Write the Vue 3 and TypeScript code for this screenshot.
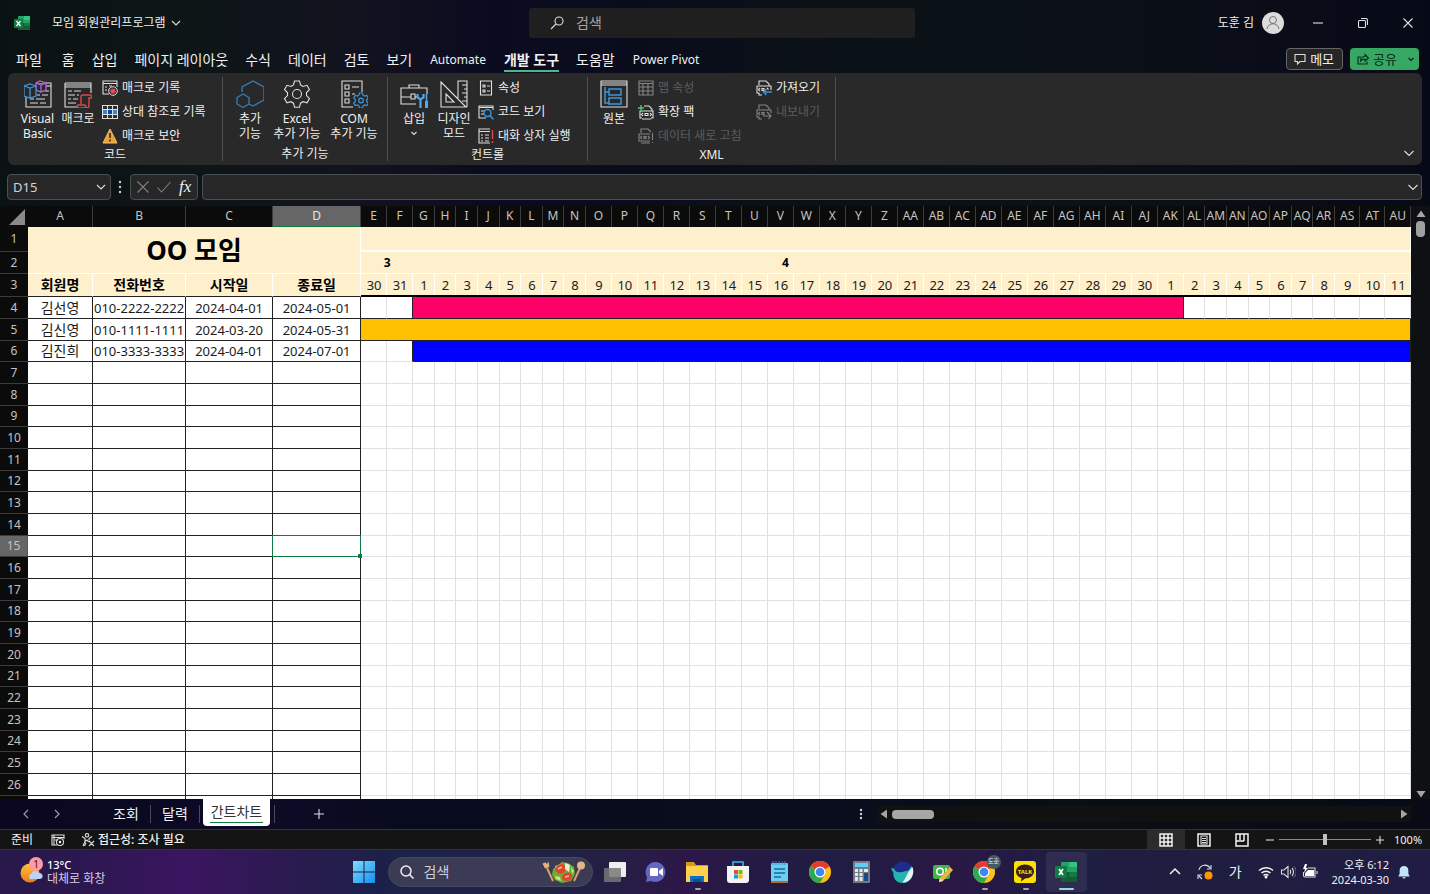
<script setup lang="ts">
import { computed, ref } from 'vue'

interface Member {
  name: string
  phone: string
  start: string
  end: string
  lead: number
  span: number
  color: string
}

const tabs = ['파일', '홈', '삽입', '페이지 레이아웃', '수식', '데이터', '검토', '보기', 'Automate', '개발 도구', '도움말', 'Power Pivot']
const activeTab = ref('개발 도구')
const cellName = ref('D15')
const formula = ref('')
const query = ref('')
const taskQuery = ref('')
const zoom = ref(50)

function columnName(i: number): string {
  const head = Math.floor(i / 26)
  return (head > 0 ? String.fromCharCode(64 + head) : '') + String.fromCharCode(65 + (i % 26))
}

const columns = Array.from({ length: 47 }, (_, i) => columnName(i))

const days = [30, 31, ...Array.from({ length: 30 }, (_, i) => i + 1), ...Array.from({ length: 11 }, (_, i) => i + 1)]

// Relative column weights: row header, A to D, then one per day.
const weights = [
  280, 650, 930, 870, 880,
  ...columns.slice(4).map((_, i) => {
    const narrow = (i >= 2 && i <= 9) || (i >= 33 && i <= 39)
    return narrow ? 216 : i > 39 ? 252 : 260
  }),
]
const totalWeight = weights.reduce((a, b) => a + b, 0)
const columnWidths = computed(() => weights.map((w) => `${(w / totalWeight) * 100}%`))

const members: Member[] = [
  { name: '김선영', phone: '010-2222-2222', start: '2024-04-01', end: '2024-05-01', lead: 2, span: 31, color: 'pink' },
  { name: '김신영', phone: '010-1111-1111', start: '2024-03-20', end: '2024-05-31', lead: 0, span: 43, color: 'amber' },
  { name: '김진희', phone: '010-3333-3333', start: '2024-04-01', end: '2024-07-01', lead: 2, span: 41, color: 'blue' },
]
const emptyRows = Array.from({ length: 21 }, (_, i) => i + 7)
const isLast = (n: number) => n === 27
</script>

<template>
  <div class="app">
    <div class="window">
      <header class="titlebar">
        <div class="doc">
          <svg class="i16" viewBox="0 0 16 16"><rect x="4" y="1" width="12" height="14" rx="1" fill="#21a366" /><path d="M10 1h5a1 1 0 0 1 1 1v3h-6z" fill="#33c481" /><path d="M4 8h12v6a1 1 0 0 1-1 1H5a1 1 0 0 1-1-1z" fill="#185c37" /><path d="M10 8h6v3h-6z" fill="#107c41" /><rect x="0" y="4" width="9" height="9" rx="1" fill="#107c41" /><path d="M2.500 6l4 5M6.500 6l-4 5" stroke="#fff" stroke-width="1.300" /></svg>
          <button class="docname" type="button">모임 회원관리프로그램
            <svg class="i10" viewBox="0 0 10 10"><path d="M1 3l4 4 4-4" class="ln" /></svg>
          </button>
        </div>
        <label class="search">
          <svg class="i14" viewBox="0 0 14 14"><circle cx="9" cy="5" r="4" class="ln" /><path d="M6 8L1 13" class="ln" /></svg>
          <input v-model="query" type="text" placeholder="검색" aria-label="검색" />
        </label>
        <div class="winctl">
          <span class="user">도훈 김</span>
          <svg class="avatar" viewBox="0 0 22 22"><circle cx="11" cy="11" r="11" fill="#dcdcdc" /><circle cx="11" cy="8" r="3.500" fill="none" stroke="#777" /><path d="M5 17c1-7 11-7 12 0" fill="none" stroke="#777" /></svg>
          <button type="button" aria-label="최소화"><svg class="i10" viewBox="0 0 10 10"><path d="M0 5h10" class="ln" /></svg></button>
          <button type="button" aria-label="이전 크기로"><svg class="i10" viewBox="0 0 10 10"><rect x=".5" y="2.500" width="7" height="7" rx="1" class="ln" /><path d="M3 .5h4.500a2 2 0 0 1 2 2V7" class="ln" /></svg></button>
          <button type="button" aria-label="닫기"><svg class="i10" viewBox="0 0 10 10"><path d="M.5.5l9 9M9.500.5l-9 9" class="ln" /></svg></button>
        </div>
      </header>

      <nav class="tabs">
        <button v-for="t in tabs" :key="t" type="button" :class="{ active: t === activeTab, latin: /^[A-Z]/.test(t) }" @click="activeTab = t">{{ t }}</button>
        <span class="grow"></span>
        <button type="button" class="memo">
          <svg class="i12" viewBox="0 0 12 12"><path d="M1 1.500h10v7H6L3.500 11V8.500H1z" class="ln" /></svg>메모
        </button>
        <button type="button" class="share">
          <svg class="i12" viewBox="0 0 12 12"><path d="M4 4H1v7h9V8.500M3.500 8c0-3 2-4.500 4.500-4.500V1.500L11.500 5 8 8V6C6 6 4.500 6.500 3.500 8z" class="ln" /></svg>공유
          <svg class="caret" viewBox="0 0 6 6"><path d="M.5 2L3 4.500 5.500 2" class="ln" /></svg>
        </button>
      </nav>

      <section class="ribbon">
        <div class="group g-code">
          <div class="body">
            <button type="button" class="big w41">
              <svg viewBox="0 0 28 28"><path d="M14 3h13v24H2V17" class="ln" /><path d="M15 6h12" class="ln" /><path d="M15 11h4M21 11h4M13 15h3M18 15h6M6 19h4M12 19h9M6 23h8M16 23h6" class="ln" /><path d="M16 1l6 2v7l-5 2-5-2V3zM12 3l5 2 5-2M17 5v7" fill="#292929" stroke="#b56ad0" stroke-width="1.300" /><path d="M6 4l6 2v10l-6 2-6-2V6zM.5 6L6 8l6-2M6 8v10" fill="#292929" stroke="#3a96dd" stroke-width="1.300" /></svg>
              <span>Visual<br />Basic</span>
            </button>
            <button type="button" class="big w40">
              <svg viewBox="0 0 28 28"><path d="M1 3h26v10M1 3v24h13M1 7h26M1 5h26" class="ln" /><path d="M4 11h4M10 11h7M4 15h7M13 15h2M4 19h3M9 19h5M4 23h8" class="ln" /><path d="M17 24V17c0-2 1-2 2-2h7c2 0 2 3 1 3h-2v7c0 3-1 3-2 3h-8c-2 0-2-3-1-3h7c1 0 0 3 2 3" fill="#292929" stroke="#e04848" stroke-width="1.400" /></svg>
              <span>매크로</span>
            </button>
            <div class="list l-code">
              <button type="button"><svg viewBox="0 0 16 16"><path d="M15 7V1H1v13h6M1 3.500h14M3 7h2M3 10h2M7 6h3M6 10h1" class="ln" /><circle cx="11" cy="11" r="4.300" fill="#292929" stroke="#ddd" /><circle cx="11" cy="11" r="2.600" fill="#e8484f" /></svg>매크로 기록</button>
              <button type="button"><svg viewBox="0 0 16 16"><rect x="1" y="5" width="14" height="6" fill="#2b88d8" /><rect x="6" y="5" width="4" height="6" fill="#103f91" /><path d="M.5 1.500h15v13H.5zM.5 5.500h15M.5 10.500h15M5.500 1.500v13M10.500 1.500v13" class="ln" /></svg>상대 참조로 기록</button>
              <button type="button"><svg viewBox="0 0 16 16"><path d="M8 1l7 14H1z" fill="#e9a13b" stroke="#f4c067" /><path d="M8 5v5M8 11.500v2" stroke="#3b2a10" stroke-width="1.600" /></svg>매크로 보안</button>
            </div>
          </div>
          <div class="caption">코드</div>
        </div>

        <div class="group g-addin">
          <div class="body">
            <button type="button" class="big w44">
              <svg viewBox="0 0 28 28"><path d="M6 12V7l11-6 11 6v13l-11 6-4-2" fill="none" stroke="#2f7fc4" stroke-width="1.300" /><path d="M7 14l6 3.500v6.500l-6 3.500-6-3.500v-6.500z" fill="none" stroke="#2f7fc4" stroke-width="1.300" /></svg>
              <span>추가<br />기능</span>
            </button>
            <button type="button" class="big w50">
              <svg viewBox="0 0 28 28"><path d="M11.500 1h5l1 4 2.500 1.500 4-1.200 2.500 4.300-3 3v3l3 3-2.500 4.300-4-1.200-2.500 1.500-1 4h-5l-1-4L8 21.700l-4 1.200-2.500-4.300 3-3v-3l-3-3L4 5.300l4 1.200L10.500 5z" class="ln" /><circle cx="14" cy="14" r="4.500" class="ln" /></svg>
              <span>Excel<br />추가 기능</span>
            </button>
            <button type="button" class="big w64">
              <svg viewBox="0 0 28 28"><path d="M22 12V1H2v26h11" class="ln" /><path d="M5 5h4v4H5zM5 12h4v4H5zM5 19h4v4H5zM12 7h7M12 14h3" class="ln" /><path d="M19.500 13h3l.6 2.200 1.500.9 2.200-.7 1.500 2.600-1.600 1.600v1.800l1.600 1.600-1.500 2.600-2.200-.7-1.500.9-.6 2.200h-3l-.6-2.200-1.500-.9-2.200.7-1.500-2.600 1.600-1.600v-1.800l-1.600-1.600 1.500-2.600 2.200.7 1.500-.9z" fill="#292929" stroke="#3a96dd" stroke-width="1.200" /><circle cx="21" cy="20.500" r="2.300" fill="none" stroke="#3a96dd" stroke-width="1.200" /></svg>
              <span>COM<br />추가 기능</span>
            </button>
          </div>
          <div class="caption">추가 기능</div>
        </div>

        <div class="group g-control">
          <div class="body">
            <button type="button" class="big w40">
              <svg viewBox="0 0 28 28"><path d="M9 8V5h10v3M16 24H1V8h26v6M1 17h10M15 17h2M11 14h4v5h-4z" class="ln" /><path d="M17.500 14v3.500l3 2 3-2V14M20.500 19v9" fill="none" stroke="#55a9ea" stroke-width="2.200" /><path d="M26.500 14v7" stroke="#55a9ea" stroke-width="1.500" /><path d="M26.500 21v7" stroke="#55a9ea" stroke-width="3" /></svg>
              <span>삽입</span><svg class="down" viewBox="0 0 6 6"><path d="M.5 2L3 4.500 5.500 2" class="ln" /></svg>
            </button>
            <button type="button" class="big w40">
              <svg viewBox="0 0 28 28"><path d="M1 2l25 25H1zM6 14l8 8H6zM18 18V1h9v26M22 5h5M24 9h3M22 13h5M24 17h3M22 21h5" class="ln" /></svg>
              <span>디자인<br />모드</span>
            </button>
            <div class="list l-control">
              <button type="button"><svg viewBox="0 0 16 16"><path d="M2.500 1h11v14h-11zM5 5h2v2H5zM5 10h2v2H5zM9 6h3M9 11h3" class="ln" /></svg>속성</button>
              <button type="button"><svg viewBox="0 0 16 16"><path d="M15 6V2H1v12h7M1 3.500h14M3 7h3M3 10h3" class="ln" /><circle cx="9.500" cy="9" r="3.500" fill="#292929" stroke="#3a96dd" stroke-width="1.400" /><path d="M12 11.500l3.500 4" stroke="#3a96dd" stroke-width="1.500" /></svg>코드 보기</button>
              <button type="button"><svg viewBox="0 0 16 16"><path d="M12 1H1v14h11M1 3.500h11M3 7h2M7 7h4M3 10h2M7 10h4M3 13h2M7 13h4" class="ln" /><path d="M14.500 2v9M14.500 13v2" stroke="#e04848" stroke-width="1.400" /></svg>대화 상자 실행</button>
            </div>
          </div>
          <div class="caption">컨트롤</div>
        </div>

        <div class="group g-xml">
          <div class="body">
            <button type="button" class="big w40">
              <svg viewBox="0 0 28 28"><path d="M1 1h26v26H1zM1 3h26M1 5h26" class="ln" /><path d="M5 7v16h4M5 12h4M9 9h12v6H9zM9 18h12v6H9z" fill="none" stroke="#3a96dd" stroke-width="1.500" /></svg>
              <span>원본</span>
            </button>
            <div class="list l-xml">
              <button type="button" disabled><svg viewBox="0 0 16 16"><path d="M1 1h14v14H1zM1 3.500h14M1 7h14M1 11h14M5 3v12M10 3v12" class="ln" /></svg>맵 속성</button>
              <button type="button"><svg viewBox="0 0 16 16"><path d="M6 2h5l3 3v2M4 14H2V7h13v7h-2M4 15h9M5 9l-1.500 1.500L5 12M12 9l1.500 1.500L12 12M7 9.500h3v2H7z" class="ln" /><path d="M3 1v6M0 4h6" stroke="#4cc47c" stroke-width="1.400" /></svg>확장 팩</button>
              <button type="button" disabled><svg viewBox="0 0 16 16"><path d="M3 5V1h7l3 3M12 6H1v7h11M3 15h9M4 8l-1.500 1.500L4 11M10 8l1.500 1.500L10 11M6 8.500h2v2H6zM14.500 5v7M14.500 14v1" class="ln" /></svg>데이터 새로 고침</button>
            </div>
            <div class="list">
              <button type="button"><svg viewBox="0 0 16 16"><path d="M3 5V1h7l3 3v2M6 15H3v-2H1V6h14v4M4 8l-1.500 1.500L4 11M11 8l1.500 1.500M6 8.500h2v2H6z" class="ln" /><path d="M16 12H8M10.500 9L7.500 12l3 3" fill="none" stroke="#3a96dd" stroke-width="1.400" /></svg>가져오기</button>
              <button type="button" disabled><svg viewBox="0 0 16 16"><path d="M3 5V1h7l3 3v2M6 15H3v-2H1V6h14v3M4 8l-1.500 1.500L4 11M11 8l1.500 1.500M6 8.500h2v2H6zM7 12h8M12.500 9.500L15 12l-2.500 3" class="ln" /></svg>내보내기</button>
            </div>
          </div>
          <div class="caption">XML</div>
        </div>
        <button type="button" class="collapse" aria-label="리본 축소"><svg class="i10" viewBox="0 0 10 10"><path d="M.5 3L5 7.500 9.500 3" class="ln" /></svg></button>
      </section>

      <div class="formulabar">
        <label class="namebox"><input v-model="cellName" type="text" aria-label="이름 상자" /><svg class="i10" viewBox="0 0 10 10"><path d="M1 3l4 4 4-4" class="ln" /></svg></label>
        <svg class="dots" viewBox="0 0 4 14"><circle cx="2" cy="2" r="1.200" /><circle cx="2" cy="7" r="1.200" /><circle cx="2" cy="12" r="1.200" /></svg>
        <div class="fx">
          <button type="button" aria-label="취소"><svg class="i12" viewBox="0 0 12 12"><path d="M.5.5l11 11M11.500.5l-11 11" class="dim" /></svg></button>
          <button type="button" aria-label="입력"><svg class="i14" viewBox="0 0 14 12"><path d="M.5 6.500l4 4.500 9-10" class="dim" /></svg></button>
          <button type="button" class="fn">fx</button>
        </div>
        <label class="formula"><input v-model="formula" type="text" aria-label="수식 입력줄" /><svg class="i10" viewBox="0 0 10 10"><path d="M.5 3L5 7.500 9.500 3" class="ln" /></svg></label>
      </div>

      <main class="sheet">
        <div class="gridwrap">
          <table>
            <colgroup><col v-for="(w, i) in columnWidths" :key="i" :style="{ width: w }" /></colgroup>
            <thead>
              <tr class="cols">
                <th class="corner"><svg viewBox="0 0 16 16"><path d="M16 0v16H0z" fill="#8a8a8a" /></svg></th>
                <th v-for="c in columns" :key="c" :class="{ sel: c === 'D' }"><span>{{ c }}</span></th>
              </tr>
            </thead>
            <tbody class="heads">
              <tr class="r1"><th class="rn">1</th><td class="title" colspan="4" rowspan="2">OO 모임</td><td class="band" colspan="43"></td></tr>
              <tr class="r2"><th class="rn">2</th><td class="month m3" colspan="2">3</td><td class="month" colspan="30">4</td><td class="month" colspan="11"></td></tr>
              <tr class="r3"><th class="rn">3</th><td class="label">회원명</td><td class="label">전화번호</td><td class="label">시작일</td><td class="label">종료일</td><td v-for="(d, i) in days" :key="i" class="day">{{ d }}</td></tr>
            </tbody>
            <tbody class="rows">
              <tr v-for="(m, r) in members" :key="m.name">
                <th class="rn">{{ r + 4 }}</th>
                <td class="box name">{{ m.name }}</td><td class="box">{{ m.phone }}</td><td class="box">{{ m.start }}</td><td class="box">{{ m.end }}</td>
                <td v-for="k in m.lead" :key="'l' + k" class="pre" :class="{ edge: k === m.lead, soft: r === 2 }"></td>
                <td class="bar" :class="m.color" :colspan="m.span"></td>
                <td v-for="k in 43 - m.lead - m.span" :key="'t' + k" class="pre"></td>
              </tr>
              <tr v-for="n in emptyRows" :key="n">
                <th class="rn" :class="{ sel: n === 15 }">{{ isLast(n) ? '' : n }}</th>
                <td v-for="k in 4" :key="k" class="box"><div v-if="n === 15 && k === 4" class="cursor"></div></td>
                <td v-for="k in 43" :key="'g' + k"></td>
              </tr>
            </tbody>
          </table>
        </div>
        <div class="vscroll">
          <svg class="i10" viewBox="0 0 10 10"><path d="M5 1.500L9.500 8h-9z" /></svg>
          <span class="vthumb"></span>
          <span class="grow"></span>
          <svg class="i10" viewBox="0 0 10 10"><path d="M5 8.500L.5 2h9z" /></svg>
        </div>
      </main>

      <div class="sheetbar">
        <div class="arrows">
          <button type="button" aria-label="이전 시트"><svg class="i10" viewBox="0 0 10 10"><path d="M7 1L3 5l4 4" class="dim2" /></svg></button>
          <button type="button" aria-label="다음 시트"><svg class="i10" viewBox="0 0 10 10"><path d="M3 1l4 4-4 4" class="dim2" /></svg></button>
        </div>
        <button type="button" class="st">조회</button>
        <button type="button" class="st">달력</button>
        <button type="button" class="st on"><span>간트차트</span></button>
        <i class="sep"></i>
        <button type="button" class="plus" aria-label="새 시트"><svg class="i10" viewBox="0 0 10 10"><path d="M5 0v10M0 5h10" class="ln" /></svg></button>
        <span class="grow"></span>
        <svg class="dots" viewBox="0 0 4 14"><circle cx="2" cy="3" r="1.200" /><circle cx="2" cy="7" r="1.200" /><circle cx="2" cy="11" r="1.200" /></svg>
        <div class="hscroll">
          <svg class="i10" viewBox="0 0 10 10"><path d="M1.500 5L8 .5v9z" /></svg>
          <span class="hthumb"></span>
          <span class="grow"></span>
          <svg class="i10" viewBox="0 0 10 10"><path d="M8.500 5L2 .5v9z" /></svg>
        </div>
      </div>

      <footer class="status">
        <span class="ready">준비</span>
        <svg class="i14" viewBox="0 0 14 14"><path d="M13 6V2H1v10h5M1 4.500h12M3 2v10M4 7h3" class="ln" /><circle cx="9" cy="9" r="3.500" class="ln" /><circle cx="9" cy="9" r="1.200" fill="#fff" /></svg>
        <svg class="i14 acc" viewBox="0 0 14 14"><circle cx="6" cy="2.300" r="1.700" class="ln" /><path d="M1 3.500l3 2v3L2 13M11 3.500L8 5.500v2M4 8.500L6 7l1.500 2M5 9.500L3.500 13M8 8l5 5M13 8l-5 5" class="ln" /></svg>
        <b>접근성: 조사 필요</b>
        <span class="grow"></span>
        <button type="button" class="view on" aria-label="기본"><svg class="i14" viewBox="0 0 14 14"><path d="M1 1h12v12H1zM1 5h12M1 9h12M5 1v12M9 1v12" class="lnb" /></svg></button>
        <button type="button" class="view" aria-label="페이지 레이아웃"><svg class="i14" viewBox="0 0 14 14"><path d="M1 1h12v12H1z" class="lnb" /><path d="M4 3h6v8H4zM5 5.500h4M5 7.500h4M5 9.500h4" class="ln" /></svg></button>
        <button type="button" class="view" aria-label="페이지 나누기"><svg class="i14" viewBox="0 0 14 14"><path d="M1 1h12v12H1zM5 1v6M9 1v7M1 8h8" class="lnb" /></svg></button>
        <button type="button" class="zb" aria-label="축소"><svg class="i8" viewBox="0 0 8 8"><path d="M0 4h8" class="ln" /></svg></button>
        <input v-model="zoom" class="zoom" type="range" min="0" max="100" aria-label="확대/축소" />
        <button type="button" class="zb" aria-label="확대"><svg class="i8" viewBox="0 0 8 8"><path d="M0 4h8M4 0v8" class="ln" /></svg></button>
        <span class="pct">100%</span>
      </footer>
    </div>

    <div class="taskbar">
      <button type="button" class="weather">
        <svg viewBox="0 0 24 26"><defs><linearGradient id="sun" x1="0" y1="0" x2="0" y2="1"><stop offset="0" stop-color="#ffc23c" /><stop offset="1" stop-color="#ee7a1a" /></linearGradient></defs><circle cx="10" cy="16" r="9.500" fill="url(#sun)" /><path d="M10 22a3 3 0 0 1 1-5 4.500 4.500 0 0 1 8-1 3 3 0 0 1 1 6z" fill="#bcd3f5" /><circle cx="16" cy="7" r="7" fill="#ff99a4" /><text x="16" y="11" text-anchor="middle" class="badge">1</text></svg>
        <span><strong>13°C</strong><br />대체로 화창</span>
      </button>
      <div class="dock">
        <button type="button" class="start" aria-label="시작"><svg viewBox="0 0 22 22"><defs><linearGradient id="win" x1="0" y1="0" x2="1" y2="1"><stop offset="0" stop-color="#7fdcff" /><stop offset="1" stop-color="#1590ee" /></linearGradient></defs><path d="M0 0h10.500v10.500H0zM11.500 0H22v10.500H11.500zM0 11.500h10.500V22H0zM11.500 11.500H22V22H11.500z" fill="url(#win)" /></svg></button>
        <label class="tsearch">
          <svg class="i14" viewBox="0 0 14 14"><circle cx="6" cy="6" r="5" class="lnb" /><path d="M9.500 9.500L13.500 13.500" class="lnb" /></svg>
          <input v-model="taskQuery" type="text" placeholder="검색" aria-label="작업 표시줄 검색" />
          <svg class="salad" viewBox="0 0 44 22"><path d="M5 7l6 13" stroke="#d9a066" stroke-width="2" /><path d="M.5 2.500l2.500 5 4.500-1.500L6.500.5 5 3 3.500 1.500z" fill="#e3b37d" /><path d="M38 7l-6 13" stroke="#d9a066" stroke-width="2" /><circle cx="39" cy="4.500" r="4" fill="#e3b58a" /><path d="M11 8l4-3 5-4 6 1 6 4 1 7-4 7-9 2-7-3-3-5z" fill="#6aae35" /><path d="M13 5l6-2 2 3-7 6z" fill="#a6d85b" /><path d="M13 9c2-8 11-7 11-1-1 5-9 7-11 1zM20 16c2-6 11-5 10 0-2 6-10 5-10 0z" fill="#e2432f" /><path d="M16 8l4-2M23 16l4-1" stroke="#ffb3a0" stroke-width="1.500" /><path d="M23 2l5 2-1 7-4-3z" fill="#f3ead8" /><path d="M13 15l5 1 1 4-5-2zM29 6l3 4-2 3z" fill="#c8e87f" /></svg>
        </label>
        <button type="button" class="app-i" aria-label="작업 보기"><svg viewBox="0 0 24 24"><rect x="6" y="2" width="17" height="15" rx="1" fill="#eee" /><rect x="1" y="8" width="17" height="14" rx="1" fill="#777" opacity=".85" /></svg></button>
        <button type="button" class="app-i" aria-label="채팅"><svg viewBox="0 0 24 24"><path d="M12 2a10 10 0 1 1-5 19l-5 1 1-5A10 10 0 0 1 12 2z" fill="#6466c4" /><rect x="6" y="8" width="8" height="8" rx="1" fill="#fff" /><path d="M15 11l4-3v8l-4-3z" fill="#fff" /></svg></button>
        <button type="button" class="app-i run" aria-label="파일 탐색기"><svg viewBox="0 0 24 24"><path d="M1 2h8l2 3h12v17H1z" fill="#d99a1c" /><path d="M1 6h22v16H1z" fill="#ffd04b" /><path d="M5 16h14v6H5z" fill="#0e70c0" /><path d="M8 19h8v3H8z" fill="#0a4f94" /></svg></button>
        <button type="button" class="app-i" aria-label="스토어"><svg viewBox="0 0 24 24"><path d="M7 7V2h10v5" fill="none" stroke="#39b4e6" stroke-width="1.600" /><path d="M1 6h22v14a3 3 0 0 1-3 3H4a3 3 0 0 1-3-3z" fill="#f3f3f5" /><path d="M8 10h4v4H8z" fill="#e5512c" /><path d="M12.500 10h4v4h-4z" fill="#7fba00" /><path d="M8 14.500h4v4H8z" fill="#00a4ef" /><path d="M12.500 14.500h4v4h-4z" fill="#ffb900" /></svg></button>
        <button type="button" class="app-i" aria-label="메모장"><svg viewBox="0 0 24 24"><rect x="4" y="3" width="17" height="19" rx="1" fill="#6dcff0" /><path d="M4 21h17v2H4z" fill="#b7693a" /><path d="M6 1v4M9 1v4M12 1v4M15 1v4M18 1v4" stroke="#2b8fbf" /><path d="M7 9h11M7 13h11M7 17h7" stroke="#176a9a" stroke-width="1.500" /></svg></button>
        <button type="button" class="app-i" aria-label="Chrome"><svg viewBox="0 0 24 24"><circle cx="12" cy="12" r="11" fill="#fbc116" /><path d="M12 12L2.500 6.500A11 11 0 0 1 21.500 6.500z" fill="#e33b2e" /><path d="M12 12L2.500 6.500A11 11 0 0 0 12 23l4.500-8z" fill="#2da94f" /><circle cx="12" cy="12" r="5.500" fill="#fff" /><circle cx="12" cy="12" r="4.300" fill="#4285f4" /></svg></button>
        <button type="button" class="app-i" aria-label="계산기"><svg viewBox="0 0 24 24"><rect x="4" y="1" width="17" height="22" rx="1" fill="#737b86" /><rect x="6" y="3" width="13" height="4" fill="#5cd0f5" /><path d="M6 9h3v3H6zM10.500 9h3v3h-3zM15 9h4v3h-4zM6 13h3v3H6zM10.500 13h3v3h-3zM6 17h3v4H6zM10.500 17h3v4h-3z" fill="#e6e8eb" /><path d="M15 13h4v8h-4z" fill="#174a8c" /></svg></button>
        <button type="button" class="app-i" aria-label="Whale"><svg viewBox="0 0 24 24"><circle cx="13" cy="12" r="10.500" fill="#202a8a" /><path d="M1.500 8c2 0 3 1 4 3 5 3 8 0 11 0 2 0 3-2 5-5 4 8-1 17-8.500 17C5 23 3 17 3.500 12 2 11 1.500 10 1.500 8z" fill="#23b6b0" /><path d="M22.500 7c3 8-3 16-10 15.500C16 18 18 11 22.500 7z" fill="#e9f3f5" /></svg></button>
        <button type="button" class="app-i" aria-label="캡처"><svg viewBox="0 0 24 24"><rect x="2" y="5" width="17" height="14" rx="2" fill="#3db54a" /><circle cx="9" cy="11.500" r="3.300" fill="none" stroke="#fff" stroke-width="1.500" /><path d="M15 8v6" stroke="#fff" stroke-width="1.500" /><path d="M8 22l1-4L19 7l3 3-10 11z" fill="#f0b43c" /><path d="M8 22l1-4 3 3z" fill="#f2e2c0" /></svg></button>
        <button type="button" class="app-i run" aria-label="Chrome 도훈"><svg viewBox="0 0 24 24"><circle cx="12" cy="12" r="11" fill="#fbc116" /><path d="M12 12L2.500 6.500A11 11 0 0 1 21.500 6.500z" fill="#e33b2e" /><path d="M12 12L2.500 6.500A11 11 0 0 0 12 23l4.500-8z" fill="#2da94f" /><circle cx="12" cy="12" r="5.500" fill="#fff" /><circle cx="12" cy="12" r="4.300" fill="#4285f4" /></svg><span class="profile">도훈</span></button>
        <button type="button" class="app-i run" aria-label="카카오톡"><svg viewBox="0 0 24 24"><rect x="1" y="1" width="22" height="22" rx="3" fill="#fae100" /><path d="M12 4.500c5 0 9 3 9 7s-4 7-9 7l-4 3 .5-3.500C5 17 3 14.500 3 11.500c0-4 4-7 9-7z" fill="#371d1e" /><text x="12" y="14" text-anchor="middle" class="talk">TALK</text></svg></button>
        <button type="button" class="app-i run now" aria-label="Excel"><svg viewBox="0 0 24 24"><rect x="7" y="2" width="16" height="20" rx="1" fill="#21a366" /><path d="M15 2h7a1 1 0 0 1 1 1v4h-8z" fill="#33c481" /><path d="M7 12h16v9a1 1 0 0 1-1 1H8a1 1 0 0 1-1-1z" fill="#185c37" /><path d="M15 12h8v5h-8z" fill="#107c41" /><rect x="1" y="6" width="12" height="12" rx="1" fill="#107c41" /><path d="M5 9l4 6M9 9l-4 6" stroke="#fff" stroke-width="1.600" /></svg></button>
      </div>
      <div class="tray">
        <svg class="i12" viewBox="0 0 12 12"><path d="M1 8l5-5 5 5" class="lnb" /></svg>
        <svg class="i16 sync" viewBox="0 0 16 16"><path d="M2 6a6 6 0 0 1 11-2M14 1v4h-4M1 15v-4h4M2 12l3 3" class="ln" /><circle cx="11.500" cy="11.500" r="4" fill="#ff9500" /></svg>
        <span class="ime">가</span>
        <div class="net">
          <svg class="i16" viewBox="0 0 16 16"><path d="M1 6.500a10 10 0 0 1 14 0M3.500 9a6.500 6.500 0 0 1 9 0M5.500 11.500a3.500 3.500 0 0 1 5 0" class="lnb" /><circle cx="8" cy="13" r="1.500" fill="#fff" /></svg>
          <svg class="i16" viewBox="0 0 16 16"><path d="M1.500 6v4H4l4 3.500v-11L4 6zM10 6c1 1 1 3 0 4M12 4c2 2 2 6 0 8" class="ln" /><path d="M14 2.500c3 3 3 8 0 11" stroke="#777" fill="none" /></svg>
          <svg class="i16" viewBox="0 0 16 16"><path d="M6 4h7v9H3c-1 0-1.500-.5-1.500-1.500V8M15 7v3" class="ln" /><path d="M6 6h6v6H3V9z" fill="#fff" /><path d="M3 0L1 5h2L2 9l4-5H4l1-4z" fill="#fff" /></svg>
        </div>
        <div class="clock">오후 6:12<br />2024-03-30</div>
        <svg class="i14 bell" viewBox="0 0 14 16"><path d="M7 1c3 0 5 2 5 5v4l1.500 3H.5L2 10V6c0-3 2-5 5-5zM5 14h4c0 2-4 2-4 0z" fill="#bfe6f7" /></svg>
      </div>
    </div>
  </div>
</template>

<style>
html,
body {
  background: #0b0f14;
  overflow: hidden;
}
</style>

<style scoped>
.app {
  display: flex;
  flex-direction: column;
  height: 100vh;
  overflow: hidden;
  color: #f0f0f0;
  font: 12px/16px "Noto Sans", "Noto Sans CJK KR", sans-serif;
}
.app *, .app *::before, .app *::after { box-sizing: border-box; }
button, input { font: inherit; color: inherit; background: none; border: 0; padding: 0; margin: 0; }
input { min-width: 0; outline: none; }
svg { display: block; flex: none; }
.ln { fill: none; stroke: #dedede; stroke-width: 1.1; }
.lnb { fill: none; stroke: #f2f2f2; stroke-width: 1.5; }
.dim { fill: none; stroke: #808080; stroke-width: 1.1; }
.dim2 { fill: none; stroke: #9a9aa5; stroke-width: 1.2; }
.grow { flex: 1; }
.i8 { width: 8px; height: 8px; }
.i10 { width: 10px; height: 10px; }
.i12 { width: 12px; height: 12px; }
.i14 { width: 14px; height: 14px; }
.i16 { width: 16px; height: 16px; }

.window {
  flex: 1;
  min-height: 0;
  display: flex;
  flex-direction: column;
  background: linear-gradient(90deg, #0b1214 0, #0d1517 14%, #12131f 25%, #0b0b20 34%, #0a0c1c 45%, #0a1116 58%, #0b1116 75%, #0a0c18 90%, #060a17 100%);
}

.titlebar {
  display: grid;
  grid-template-columns: minmax(0, 1fr) 386px minmax(0, 1fr);
  align-items: center;
  height: 44px;
  padding: 1px 0 0 14px;
}
.doc { display: flex; align-items: center; gap: 22px; }
.docname { display: flex; align-items: center; gap: 5px; }
.search {
  display: flex;
  align-items: center;
  gap: 12px;
  height: 30px;
  padding-left: 21px;
  background: #1f1f1f;
  border-radius: 3px;
  font-size: 14px;
}
.search input::placeholder { color: #a5a5a5; opacity: 1; }
.winctl { display: flex; align-items: center; justify-content: flex-end; }
.user { margin-right: 8px; }
.avatar { width: 22px; height: 22px; margin-right: 11px; }
.winctl button { width: 45px; height: 30px; display: grid; place-items: center; }

.tabs { display: flex; align-items: center; gap: 17px; height: 29px; padding: 2px 11px 0 16px; font-size: 14px; line-height: 20px; }
.tabs button { white-space: nowrap; }
.tabs button:first-child { margin-right: 3px; }
.tabs .latin { font-size: 12px; padding: 0 1px; }
.tabs .active { font-weight: 700; box-shadow: 0 2px 0 #4fb583; }
.tabs .memo, .tabs .share { display: flex; align-items: center; height: 22px; border-radius: 4px; font-size: 13px; margin-bottom: 2px; }
.tabs .memo { gap: 4px; padding: 0 8px 0 7px; background: #262626; border: 1px solid #666; margin-right: -10px; }
.tabs .share { gap: 4px; padding: 0 5px 0 7px; background: #36a864; color: #0a2817; }
.share .ln { stroke: #0a2817; }
.caret { width: 6px; height: 6px; margin-left: 7px; }

.ribbon { display: flex; height: 92px; flex: none; margin: 0 8px; background: #292929; border-radius: 6px; }
.group { display: flex; flex-direction: column; border-right: 1px solid #505050; margin: 4px 0; }
.g-code { width: 215px; }
.g-addin { width: 165px; }
.g-control { width: 200px; }
.g-xml { width: 248px; }
.body { display: flex; height: 74px; padding-left: 6px; }
.g-code .body { padding-left: 9px; }
.g-addin .body { padding-left: 5px; }
.caption { text-align: center; line-height: 14px; }
.big { display: flex; flex-direction: column; align-items: center; line-height: 15px; padding-top: 3px; white-space: nowrap; }
.big > svg { width: 28px; height: 28px; margin-bottom: 3px; }
.big > svg.down { width: 6px; height: 6px; margin-top: 4px; }
.w40 { width: 40px; }
.w41 { width: 41px; }
.w44 { width: 44px; }
.w50 { width: 50px; }
.w64 { width: 64px; }
.list { display: flex; flex-direction: column; padding-left: 4px; margin-top: -1px; }
.list button { display: flex; align-items: center; gap: 4px; height: 24px; white-space: nowrap; }
.list svg { width: 16px; height: 16px; }
.list button:disabled { color: #5c5c5c; }
.list button:disabled .ln { stroke: #858585; }
.l-xml { width: 118px; }
.collapse { margin: auto 8px 7px auto; }

.formulabar { display: flex; align-items: center; height: 26px; margin: 9px 8px 6px 7px; flex: none; }
.namebox, .fx, .formula { display: flex; align-items: center; height: 26px; background: #272727; border: 1px solid #4b4f52; border-radius: 4px; }
.namebox { width: 104px; padding: 0 4px 0 5px; font-size: 13px; color: #d5d5d5; }
.namebox input { flex: 1; }
.dots { width: 4px; height: 14px; fill: #d0d0d0; }
.formulabar .dots { margin: 0 8px 0 7px; }
.fx { width: 68px; gap: 8px; padding-left: 6px; margin-right: 4px; }
.fn { font: italic 17px/20px "Liberation Serif", serif; }
.formula { flex: 1; padding-right: 3px; }
.formula input { flex: 1; }

.sheet { flex: 1; min-height: 0; display: flex; }
.gridwrap { flex: 1; min-width: 0; overflow: hidden; background: #fff; color: #1c1c1c; }
table { width: 100%; table-layout: fixed; border-collapse: separate; border-spacing: 0; font-size: 13px; line-height: 16px; }
td, th { padding: 0; text-align: center; white-space: nowrap; font-weight: 400; }
td { border-right: 1px solid #e1e1e1; border-bottom: 1px solid #e1e1e1; }
.cols th { height: 21px; padding-bottom: 2px; background: #0b0b0b; color: #c4c4c4; font-size: 12px; border-right: 1px solid #3c3c3c; }
.cols th span { display: flex; justify-content: center; }
.cols th.sel { background: #666; color: #e6e6e6; box-shadow: inset 0 -1px 0 #107c41; }
.cols .corner { border-right: 0; padding-bottom: 0; }
.corner svg { width: 16px; height: 16px; margin-left: 9px; }
.rn { background: #0b0b0b; color: #c4c4c4; font-size: 12px; border-bottom: 1px solid #3c3c3c; }
.rn.sel { background: #666; border-right: 1px solid #107c41; }
.r1 { height: 25px; }
.r2 { height: 22px; }
.r3 { height: 23px; }
.heads td { background: #fff0cd; border-color: #fff; }
.heads .title { font-size: 26px; font-weight: 700; line-height: 32px; color: #000; }
.heads .band { border-bottom-width: 2px; }
.heads .month { font-weight: 700; font-size: 12px; color: #000; border-right: 0; }
.heads .label { font-size: 14px; font-weight: 700; color: #000; border-bottom-color: #222; }
.heads .day { border-right: 0; border-bottom: 2px solid #000; box-shadow: inset -1px 0 0 #fff; }
.rows tr { height: 22px; }
.rows tr:nth-child(3n) { height: 21px; }
.rows .box { border-color: #222; }
.rows .name { font-size: 14px; }
.rows .pre { border-bottom-color: #222; }
.rows .edge { border-right-color: #222; }
.rows .soft { border-bottom-color: #e1e1e1; }
.rows .bar { border-color: #222; }
.pink { background: #ff0066; }
.amber { background: #ffc000; }
.blue { background: #0000ff; }
.box { position: relative; }
.cursor { position: absolute; z-index: 2; inset: -1px; border: 1px solid #107c41; }
.cursor::after { content: ""; position: absolute; right: -2px; bottom: -2px; width: 4px; height: 4px; background: #107c41; }
.vscroll { width: 19px; display: flex; flex-direction: column; align-items: center; padding: 3px 0 0; background: #0e1013; fill: #a6a6a6; }
.vthumb { width: 9px; height: 16px; margin-top: 2px; border-radius: 4px; background: #a0a0a0; }

.sheetbar {
  display: flex;
  align-items: center;
  height: 30px;
  flex: none;
  padding-right: 19px;
  background: linear-gradient(90deg, #0b0720 0, #0c0a25 20%, #080b1e 28%, #0a0d1c 60%, #0b0e12 75%, #080b16 100%);
  font-size: 14px;
}
.arrows { display: flex; width: 102px; padding-left: 21px; gap: 21px; }
.st { height: 18px; width: 49px; line-height: 18px; border-right: 1px solid #4a4a58; white-space: nowrap; }
.st.on { align-self: flex-start; width: 67px; height: 27px; margin-left: 3px; background: #fff; color: #333; border: 0; border-radius: 0 0 4px 4px; }
.st.on span { display: block; margin: 0 7px; line-height: 20px; border-bottom: 1px solid #107c41; }
.sep { width: 1px; height: 18px; margin-left: 4px; background: #4a4a58; }
.plus { margin-left: 39px; }
.hscroll { display: flex; align-items: center; width: 534px; height: 16px; margin-left: 14px; padding: 0 2px; background: #111; fill: #a6a6a6; }
.hthumb { width: 42px; height: 9px; margin-left: 3px; border-radius: 4px; background: #a6a6a6; }

.status { display: flex; align-items: center; height: 21px; flex: none; padding: 0 8px 0 11px; background: #141414; border-top: 1px solid #333; border-bottom: 1px solid #333; font-size: 12px; line-height: 18px; }
.ready { width: 40px; }
.acc { margin: 0 3px 0 16px; }
.status b { font-weight: 500; }
.view { width: 38px; height: 19px; display: grid; place-items: center; }
.view.on { background: #2b2b2b; }
.zb { margin: 0 5px; }
.zoom { appearance: none; width: 92px; height: 12px; background: linear-gradient(#8a8a8a, #8a8a8a) center / 100% 1px no-repeat; }
.zoom::-webkit-slider-thumb { appearance: none; width: 4px; height: 11px; background: #c0c0c0; }
.pct { margin-left: 5px; width: 28px; font-size: 11px; }

.taskbar {
  display: grid;
  grid-template-columns: minmax(0, 1fr) auto minmax(0, 1fr);
  align-items: center;
  height: 44px;
  flex: none;
  background: linear-gradient(90deg, #28194a 0, #2c1750 6%, #3a1560 13%, #2b1a50 20%, #1b2148 27%, #202243 40%, #2d1748 48%, #241a45 52%, #201d44 60%, #2b1745 66%, #1e1d43 74%, #1f1e3f 85%, #201c44 100%);
}
.weather { display: flex; align-items: center; gap: 3px; padding-left: 20px; text-align: left; line-height: 14px; color: #d6cde2; justify-self: start; }
.weather svg { width: 24px; height: 26px; margin-bottom: 4px; }
.weather strong { color: #fff; font-weight: 500; font-size: 11px; }
.badge { font: 10px "Noto Sans", sans-serif; fill: #3a1520; }
.dock { display: flex; align-items: center; padding-left: 2px; }
.start { width: 37px; height: 40px; display: grid; place-items: center; margin-right: 5px; }
.start svg { width: 22px; height: 22px; }
.tsearch { display: flex; align-items: center; width: 205px; height: 30px; margin-right: 2px; padding: 0 6px 0 11px; gap: 10px; border-radius: 15px; background: #3c3b56; border: 1px solid #4a4964; font-size: 14px; }
.tsearch input { flex: 1; }
.tsearch input::placeholder { color: #d0d0da; opacity: 1; }
.salad { width: 44px; height: 22px; }
.app-i { position: relative; width: 41px; height: 40px; display: grid; place-items: center; }
.app-i > svg { width: 24px; height: 24px; }
.run::after { content: ""; position: absolute; left: 18px; bottom: 2px; width: 6px; height: 2px; border-radius: 1px; background: #a6a0b5; }
.run.now { background: #2e2d50; border-radius: 4px; }
.run.now::after { left: 13px; width: 15px; background: #9fd0e6; }
.profile { position: absolute; top: 3px; right: 4px; width: 14px; height: 14px; border-radius: 7px; background: #455a64; font-size: 6px; line-height: 13px; }
.talk { font: 700 6px "Noto Sans", sans-serif; fill: #fae100; }
.tray { display: flex; align-items: center; justify-content: flex-end; gap: 16px; padding-right: 19px; }
.ime { font-size: 14px; }
.net { display: flex; gap: 6px; }
.clock { text-align: right; line-height: 15px; font-size: 11px; margin-left: -2px; }
.bell { margin-left: -8px; }
</style>
